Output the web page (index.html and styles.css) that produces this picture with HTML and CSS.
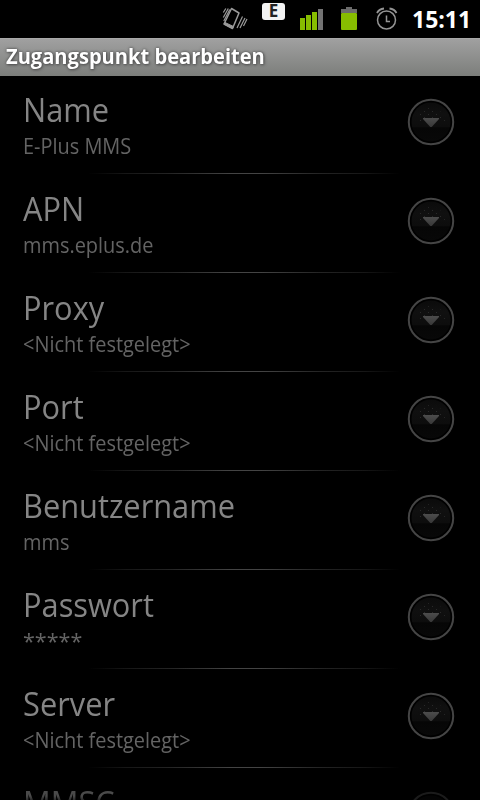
FILE: index.html
```html
<!DOCTYPE html>
<html lang="de">
<head>
<meta charset="utf-8">
<title>Zugangspunkt bearbeiten</title>
<link rel="stylesheet" href="styles.css">
</head>
<body>
<svg class="defs" width="0" height="0">
  <defs>
    <linearGradient id="disc" x1="0" y1="0" x2="0" y2="1">
      <stop offset="0" stop-color="#0b0b0b"/><stop offset=".3" stop-color="#101010"/><stop offset=".62" stop-color="#0d0d0d"/><stop offset=".65" stop-color="#060606"/><stop offset="1" stop-color="#080808"/>
    </linearGradient>
    <linearGradient id="arrow" x1="0" y1="0" x2="0" y2="1">
      <stop offset="0" stop-color="#4c4c4c"/><stop offset="1" stop-color="#383838"/>
    </linearGradient>
    <pattern id="dots" width="8" height="6" patternUnits="userSpaceOnUse"><path d="M1 1h1v1H1zM5 4h1v1H5z" fill="#292929"/></pattern>
    <symbol id="more" viewBox="0 0 48 48">
      <circle cx="24" cy="24" r="19.5" fill="url(#disc)"/>
      <path d="M10 24a14 14 0 0 1 28 0z" fill="url(#dots)"/>
      <circle cx="24" cy="24" r="22.200" fill="none" stroke="#454545" stroke-width="2"/>
      <path d="M16 20h16v1l-7.300 8h-1.400L16 21z" fill="url(#arrow)"/>
    </symbol>
  </defs>
</svg>
<header class="status">
  <svg class="status-icons" width="200" height="38" viewBox="210 0 200 38">
    <g fill="none" stroke="#9a9a9a">
      <path d="M231.500 8.500l7.500 4.500-6.500 15.500-8.500-4.500z" stroke-width="1.500" stroke-linejoin="round"/>
      <path d="M225 22.500l8.500 4-1 2-8.500-4.500z" fill="#9a9a9a" stroke-width="1"/>
      <path d="M223.300 12.500l2.500-4M223.300 17.500l5-9M223.800 21l6-11.500M237 28l5.500-11.500M240 28l5-10M243.500 26l3.500-7" stroke-width="1.200"/>
    </g>
    <rect x="262" y="3" width="23" height="17" rx="3" fill="#f3f3f3"/>
    <text class="edge" x="273.500" y="17" text-anchor="middle">E</text>
    <g fill="#87bd00">
      <path d="M300 18h5v12h-5zM306 15h5v15h-5zM312 12h5v18h-5z"/>
      <path d="M318 9h5v21h-5z" fill="#737373"/>
    </g>
    <path d="M346 7h6v2h5v4h-16v-4h5z" fill="#6c6c6c"/>
    <rect x="341" y="13" width="16" height="17" rx="1" fill="#87bd00"/>
    <g fill="none" stroke="#949494" stroke-width="1.500">
      <circle cx="386.500" cy="20" r="9"/>
      <path d="M377 13q2-4 7-4.500M396.500 13q-2-4-7-4.500" stroke-width="1.800"/>
      <path d="M386.500 15.500v6h3.500"/>
    </g>
  </svg>
  <span class="clock">15:11</span>
</header>
<h1 class="titlebar"><span class="titlebar-text">Zugangspunkt bearbeiten</span></h1>
<main class="list">
  <section class="row"><div class="text"><div class="name">Name</div><div class="value">E-Plus MMS</div></div><svg class="more"><use href="#more"/></svg></section>
  <section class="row"><div class="text"><div class="name">APN</div><div class="value">mms.eplus.de</div></div><svg class="more"><use href="#more"/></svg></section>
  <section class="row"><div class="text"><div class="name">Proxy</div><div class="value">&lt;Nicht festgelegt&gt;</div></div><svg class="more"><use href="#more"/></svg></section>
  <section class="row"><div class="text"><div class="name">Port</div><div class="value">&lt;Nicht festgelegt&gt;</div></div><svg class="more"><use href="#more"/></svg></section>
  <section class="row"><div class="text"><div class="name">Benutzername</div><div class="value">mms</div></div><svg class="more"><use href="#more"/></svg></section>
  <section class="row"><div class="text"><div class="name">Passwort</div><div class="value masked">*****</div></div><svg class="more"><use href="#more"/></svg></section>
  <section class="row"><div class="text"><div class="name">Server</div><div class="value">&lt;Nicht festgelegt&gt;</div></div><svg class="more"><use href="#more"/></svg></section>
  <section class="row fading"><div class="text"><div class="name">MMSC</div></div><svg class="more"><use href="#more"/></svg></section>
</main>
</body>
</html>
```
FILE: styles.css
```css
* { box-sizing: border-box; }
body {
  margin: 0;
  width: 480px;
  height: 800px;
  overflow: hidden;
  display: flex;
  flex-direction: column;
  background: #000;
  color: #fff;
  font-family: "Open Sans", "Noto Sans", sans-serif;
}
.defs { position: absolute; }
.status {
  flex: none;
  height: 38px;
  display: flex;
  padding-left: 210px;
}
.status-icons { flex: none; }
.edge { font: bold 17px "Open Sans", sans-serif; fill: #222; }
.clock {
  margin-left: 2px;
  font-size: 23px;
  font-weight: 700;
  line-height: 38px;
}
.titlebar {
  flex: none;
  height: 38px;
  margin: 0;
  padding-left: 6px;
  background: linear-gradient(#a0a0a0, #7c7e7b);
  border-top: 1px solid #a8a8a8;
  font-size: 21px;
  font-weight: 700;
  line-height: 35px;
  text-shadow: 0 0 3px #444, 1px 1px 3px #555;
  white-space: nowrap;
}
.titlebar-text { display: inline-block; transform: scaleX(.957); transform-origin: 0 50%; }
.list { flex: 1; min-height: 0; overflow: hidden; }
.row {
  height: 99px;
  display: flex;
  justify-content: space-between;
  padding: 13px 25px 0 23px;
  background: linear-gradient(90deg, transparent 88px, #161616 125px, #242424 170px, #444 230px, #444 260px, #242424 320px, #161616 365px, transparent 400px) 0 98px / 480px 1px no-repeat;
}
.row:first-child { height: 98px; padding-top: 12px; background-position: 0 97px; }
.text { white-space: nowrap; }
.name, .value { transform-origin: 0 50%; }
.name { color: #858585; font-size: 33px; line-height: 44px; transform: scaleX(.933); }
.value { color: #646464; font-size: 22px; line-height: 26px; transform: scaleX(.906); }
.masked { transform: scaleX(.98); }
.more { width: 48px; height: 48px; margin-top: 10px; flex: none; }
.fading .name { color: #4a4a4a; -webkit-mask-image: linear-gradient(#000 15px, transparent 24px); mask-image: linear-gradient(#000 15px, transparent 24px); }
.fading .more { opacity: .4; }
```
